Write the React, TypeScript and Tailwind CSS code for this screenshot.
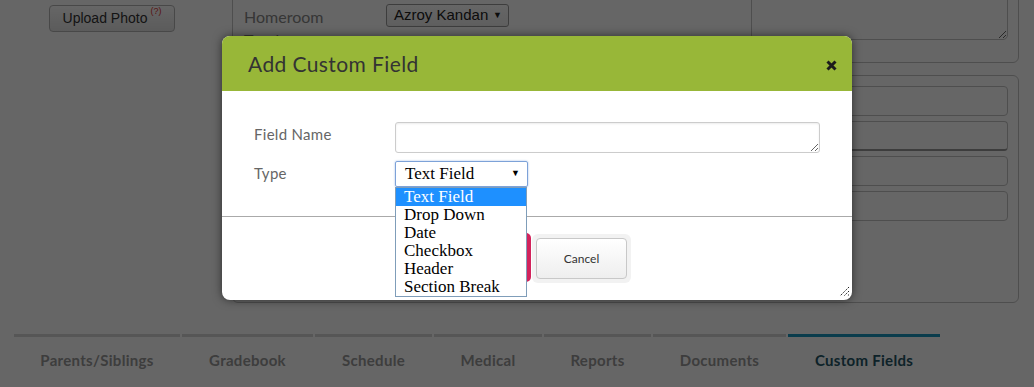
import React from 'react'

const tabs = [
  { label: 'Parents/Siblings', w: 'w-[166px]' },
  { label: 'Gradebook', w: 'w-[131px]' },
  { label: 'Schedule', w: 'w-[117px]' },
  { label: 'Medical', w: 'w-[108px]' },
  { label: 'Reports', w: 'w-[107px]' },
  { label: 'Documents', w: 'w-[133px]' },
  { label: 'Custom Fields', w: 'w-[152px]', active: true },
]

const options = ['Text Field', 'Drop Down', 'Date', 'Checkbox', 'Header', 'Section Break']

function CloseIcon() {
  return (
    <svg width="11" height="11" viewBox="0 0 11 11">
      <path d="M1.5 1.5 L9.5 9.5 M9.5 1.5 L1.5 9.5" stroke="#1c1c1c" strokeWidth="3" strokeLinecap="butt" />
    </svg>
  )
}

function Grip() {
  return (
    <svg width="12" height="12" viewBox="0 0 12 12">
      <path d="M11 2 L2 11 M11 6 L6 11 M11 9.5 L9.5 11" stroke="#222" strokeWidth="1" strokeDasharray="1.5 1" />
    </svg>
  )
}

export default function App() {
  return (
    <div className="relative h-[387px] w-[1034px] overflow-hidden bg-white font-['Lato',sans-serif]">
      {/* page behind the dialog */}
      <div className="flex">
        <div className="w-[232px] shrink-0 pl-[49px] pt-[5px]">
          <button className="flex h-[27px] w-[126px] items-center justify-center rounded-[4px] border border-[#b5b5b5] bg-gradient-to-b from-white to-[#e4e4e4] font-['Liberation_Sans',Arial,sans-serif] text-[14px] text-[#333]">
            Upload Photo
            <sup className="ml-[3px] -mt-[6px] text-[9px] text-[#d33]">(?)</sup>
          </button>
        </div>

        <div className="flex w-[787px] shrink-0 flex-col gap-[12px]">
          <div className="-mt-[60px] flex h-[123px] rounded-b-[6px] border border-[#c4c4c4]">
            <div className="flex w-[518px] shrink-0 pl-[11px] pt-[64px]">
              <div className="w-[142px] text-[16px] leading-[23px] text-[#888]">
                Homeroom
                <br />
                Teacher
              </div>
              <div className="mt-[-1px] flex h-[23px] w-[123px] items-center justify-between rounded-[3px] border border-[#9a9a9a] bg-gradient-to-b from-white to-[#ececec] pl-[7px] pr-[6px] font-['Liberation_Sans',Arial,sans-serif] text-[15px] text-[#222]">
                Azroy Kandan
                <span className="text-[9px]">▼</span>
              </div>
            </div>
            <textarea className="-mt-px h-[100px] w-[257px] rounded-b-[5px] border border-[#c4c4c4] bg-white" />
          </div>

          <div className="flex h-[228px] rounded-[6px] border border-[#c4c4c4]">
            <div className="w-[518px] shrink-0" />
            <div className="flex flex-col gap-[5px] pt-[10px]">
              <div className="h-[30px] w-[257px] rounded-[4px] border border-[#c4c4c4]" />
              <div className="h-[30px] w-[257px] rounded-[4px] border border-[#c4c4c4] border-b-[#999] border-b-2" />
              <div className="h-[30px] w-[257px] rounded-[4px] border border-[#c4c4c4]" />
              <div className="h-[30px] w-[257px] rounded-[4px] border border-[#c4c4c4]" />
            </div>
          </div>
        </div>
      </div>

      <div className="mt-[31px] flex gap-[2px] pl-[14px]">
        {tabs.map((t) => (
          <div
            key={t.label}
            className={`${t.w} border-t-[3px] pt-[13px] text-center text-[15px] font-bold leading-[20px] tracking-[0.3px] ${
              t.active ? 'border-[#1b96bd] text-[#245566]' : 'border-[#d6d6d6] text-[#999]'
            }`}
          >
            {t.label}
          </div>
        ))}
      </div>

      {/* overlay */}
      <div className="absolute inset-0 bg-black/60" />

      {/* dialog */}
      <div className="absolute left-[222px] top-[36px] flex h-[264px] w-[630px] flex-col rounded-[8px] bg-white shadow-[0_0_10px_rgba(0,0,0,0.55)]">
        <div className="flex h-[55px] shrink-0 items-center justify-between rounded-t-[8px] bg-[#98b738] pl-[26px] pr-[15px]">
          <span className="text-[21px] tracking-[0.4px] text-[#333]">Add Custom Field</span>
          <span className="mt-[4px]">
            <CloseIcon />
          </span>
        </div>

        <div className="flex h-[126px] shrink-0 flex-col gap-[8px] border-b border-[#aaa] pl-[32px] pt-[31px] text-[15px] tracking-[0.3px] text-[#666]">
          <div className="flex items-center">
            <span className="-mt-[6px] w-[141px]">Field Name</span>
            <textarea className="h-[31px] w-[425px] rounded-[3px] border border-[#ccc] shadow-[inset_0_1px_2px_rgba(0,0,0,0.08)]" />
          </div>
          <div className="relative flex items-center">
            <span className="-mt-[2px] w-[141px]">Type</span>
            <div className="flex h-[26px] w-[133px] items-center justify-between rounded-[2px] border border-[#7da2d8] pl-[9px] pr-[7px] font-['Liberation_Serif',serif] text-[17px] tracking-normal text-black shadow-[0_0_2px_rgba(80,130,210,0.6)]">
              Text Field
              <span className="text-[9px]">▼</span>
            </div>

            <div className="absolute left-[141px] top-[26px] z-10 w-[132px] border border-[#7f9db9] bg-white font-['Liberation_Serif',serif] text-[17px] leading-[18px] tracking-normal text-black">
              {options.map((o, i) => (
                <div key={o} className={`pl-[8px] ${i === 0 ? 'bg-[#1e90ff] text-white' : ''}`}>
                  {o}
                </div>
              ))}
            </div>
          </div>
        </div>

        <div className="relative flex flex-1 items-start gap-[1px] pl-[210px] pt-[16px]">
          {/* primary button, covered by the open list */}
          <button aria-label="Save" className="h-[49px] w-[99px] rounded-[5px] bg-[#d2235c]" />
          <div className="mt-[1px] rounded-[6px] bg-[#f2f2f2] p-[4px]">
            <button className="h-[41px] w-[91px] rounded-[4px] border border-[#c8c8c8] bg-gradient-to-b from-white to-[#eeeeee] text-[12px] text-[#333]">
              Cancel
            </button>
          </div>
          <span className="absolute bottom-[3px] right-[2px]">
            <Grip />
          </span>
        </div>
      </div>
    </div>
  )
}
